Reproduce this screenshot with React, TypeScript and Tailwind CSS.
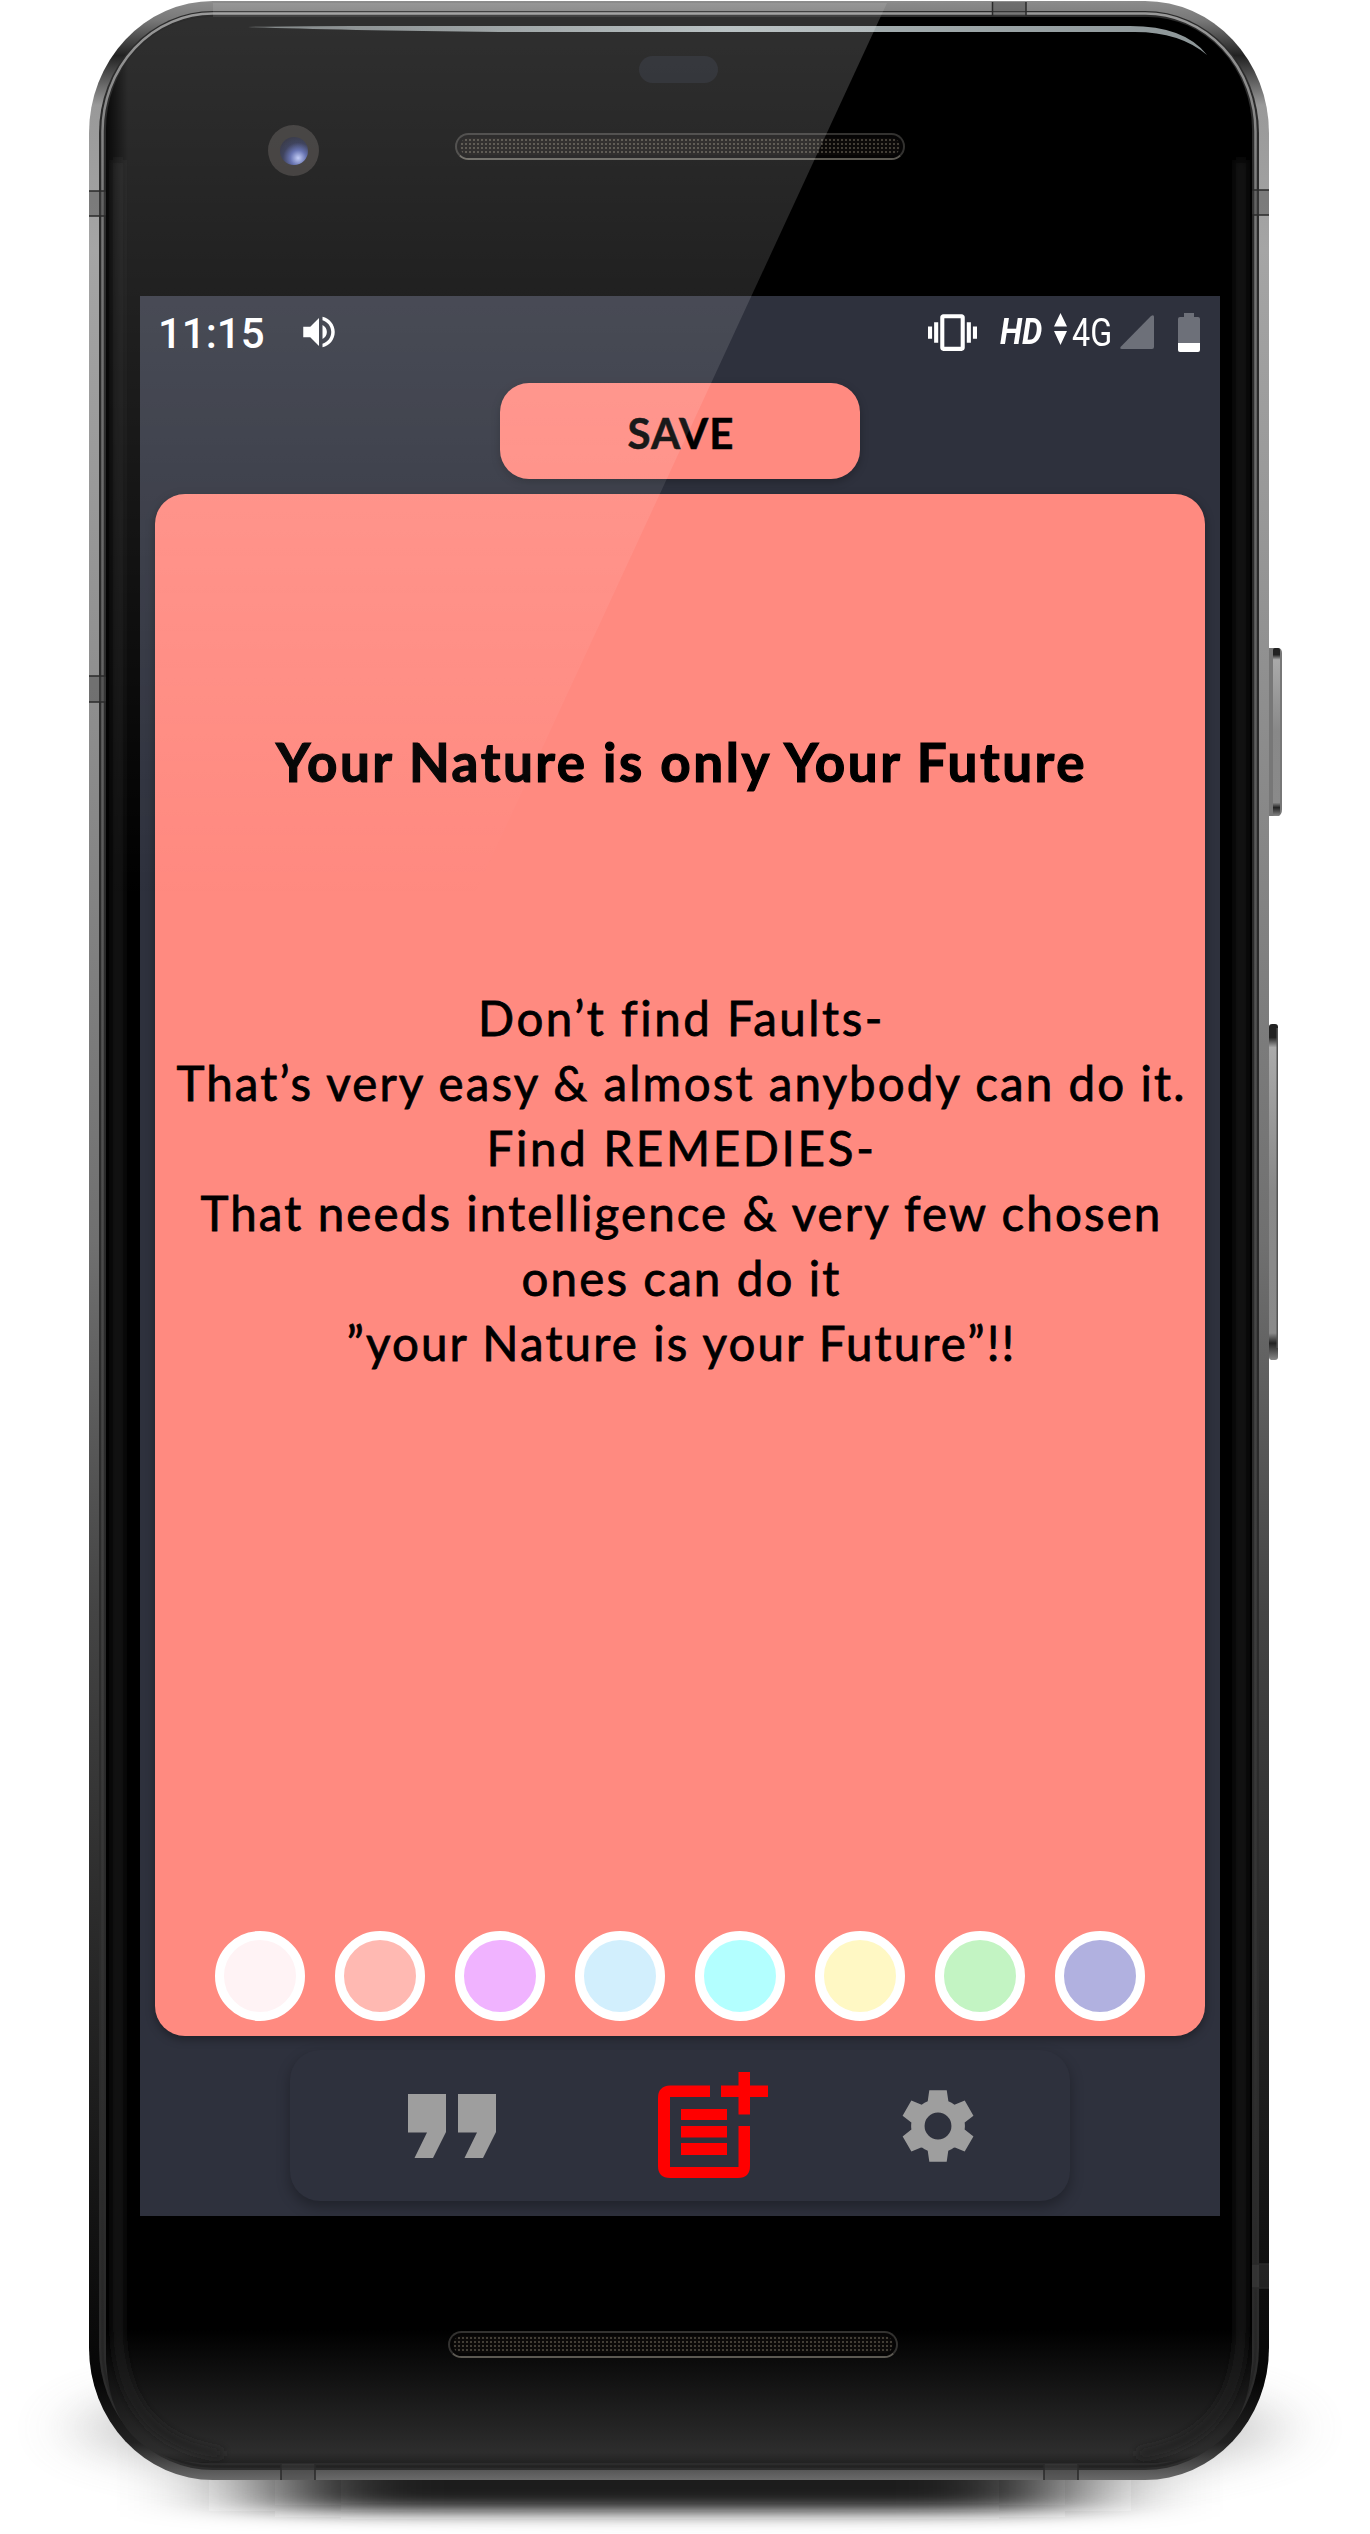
import { useLayoutEffect, useRef, useState } from "react";

/* One line of text, tracked so that it fills the given width. */
function FitLine({ text, className, width }: { text: string; className: string; width: number }) {
  const ref = useRef<HTMLSpanElement>(null);
  const [spacing, setSpacing] = useState(0);
  useLayoutEffect(() => {
    const natural = ref.current!.getBoundingClientRect().width;
    setSpacing((width - natural) / text.length);
  }, [text, width]);
  return (
    <div className={`whitespace-nowrap ${className}`}>
      <span ref={ref} style={{ letterSpacing: spacing }}>{text}</span>
    </div>
  );
}

const quote = [
  { text: "Don’t find Faults-", width: 406 },
  { text: "That’s very easy & almost anybody can do it.", width: 1010 },
  { text: "Find REMEDIES-", width: 390 },
  { text: "That needs intelligence & very few chosen", width: 962 },
  { text: "ones can do it", width: 320 },
  { text: "”your Nature is your Future”!!", width: 670 },
];

const swatches = ["bg-[#fff3f5]", "bg-[#ffb9b2]", "bg-[#f0b3ff]", "bg-[#d2effd]", "bg-[#b3ffff]", "bg-[#fff8c4]", "bg-[#c3f4c3]", "bg-[#b1b1e0]"];

function StatusBar() {
  return (
    <div className="flex h-[72px] items-center pl-[18px] pr-5 font-[Roboto] text-white">
      <span className="pt-[3px] text-[42px] font-medium leading-[72px]">11:15</span>
      <svg className="ml-[33px] size-[42px]" viewBox="0 0 24 24" fill="currentColor">
        <path d="M3 9v6h4l5 5V4L7 9H3zm13.500 3c0-1.770-1.020-3.290-2.500-4.030v8.050c1.480-.730 2.500-2.250 2.500-4.020zM14 3.230v2.060c2.890.860 5 3.540 5 6.710s-2.110 5.850-5 6.710v2.060c4.010-.910 7-4.490 7-8.770s-2.990-7.860-7-8.770z" />
      </svg>
      <div className="ml-auto flex items-center">
        <svg className="size-[49px]" viewBox="0 0 24 24" fill="currentColor">
          <path d="M0 15h2V9H0v6zm3 2h2V7H3v10zm19-8v6h2V9h-2zm-3 8h2V7h-2v10zM16.500 3h-9C6.670 3 6 3.670 6 4.500v15c0 .830.670 1.500 1.500 1.500h9c.830 0 1.500-.670 1.500-1.500v-15c0-.830-.670-1.500-1.500-1.500zM16 19H8V5h8v14z" />
        </svg>
        <span className="ml-[23px] inline-block w-[50px] origin-left scale-x-[0.87] text-[37px] font-bold italic leading-[70px]">HD</span>
        <svg className="ml-1 h-8 w-[13px] -translate-y-[3px]" viewBox="0 0 13 32" fill="currentColor">
          <path d="M6.500 0 13 13.500H0zM6.500 32 13 18H0z" />
        </svg>
        <span className="ml-[5px] inline-block w-12 origin-left scale-x-[0.85] pt-px text-[38px] leading-[70px]">4G</span>
        <svg className="h-[34px] w-[34px]" viewBox="0 0 34 34"><path d="M34 2v30q0 2-2 2H2q-3 0-1-2.500L31 1q3-2 3 1z" fill="#6d7079" /></svg>
        <svg className="ml-6 h-[39px] w-[22px]" viewBox="0 0 22 39">
          <path d="M6 0h10v4h4q2 0 2 2v25H0V6q0-2 2-2h4z" fill="#6d7079" />
          <path d="M0 30h22v7q0 2-2 2H2q-2 0-2-2z" fill="#fff" />
        </svg>
      </div>
    </div>
  );
}

function Screen() {
  return (
    <div className="flex h-[1920px] w-[1080px] flex-col overflow-hidden bg-[#2e313d] font-['Lato',sans-serif] text-black">
      <StatusBar />
      <button className="mx-auto mt-[15px] flex h-24 w-[360px] shrink-0 justify-center rounded-[29px] bg-[#ff8a80] pl-0.5 pt-1 shadow-[0_3px_9px_rgba(0,0,0,0.25)]">
        <FitLine text="SAVE" width={107} className="text-[42px] font-bold leading-[92px] [-webkit-text-stroke:0.5px_black]" />
      </button>
      <main className="mx-[15px] mt-[15px] flex h-[1542px] shrink-0 flex-col items-center rounded-[30px] bg-[#ff8a80] shadow-[0_3px_10px_rgba(0,0,0,0.35)]">
        <FitLine text="Your Nature is only Your Future" width={811} className="mt-[236px] pl-[3px] text-[53px] font-bold leading-[64px] [-webkit-text-stroke:1.2px_black]" />
        <div className="mt-[191px] flex flex-col items-center pl-[3px]">
          {quote.map((l) => (
            <FitLine key={l.text} text={l.text} width={l.width} className="text-[47.500px] font-normal leading-[65px] [-webkit-text-stroke:0.8px_black]" />
          ))}
        </div>
        <div className="mb-[15px] mt-auto flex gap-[30px]">
          {swatches.map((c) => (
            <button key={c} className={`size-[90px] rounded-full border-[9px] border-white ${c}`} />
          ))}
        </div>
      </main>
      <nav className="mx-auto mt-[14px] flex h-[151px] w-[780px] shrink-0 items-center rounded-[30px] bg-[#2e313d] shadow-[0_6px_14px_rgba(0,0,0,0.3)]">
        <svg className="ml-[118px] h-16 w-[88px]" viewBox="0 0 88 64" fill="#9e9e9e">
          <path d="M0 0h38v38L25 64H6.500l12.500-25.500H0zM50 0h38v38L75 64H56.500L69 38.500H50z" />
        </svg>
        <svg className="ml-[162px] h-[106px] w-[110px] -translate-y-px" viewBox="0 0 110 106" fill="#f00">
          <path d="M52 13.500H12Q0 14 0 26v68q0 12 12 12h68q12 0 12-12V54H80.500v41H12V25h40zM80.500 0H92v13.500h18V25H92v17.500H80.500V25H63V13.500h17.500zM23 37h46v11H23zM23 54h46v11.500H23zM23 71h46v12H23z" />
        </svg>
        <svg className="ml-[127px] size-[86px]" viewBox="0 0 24 24" fill="#9e9e9e" fillRule="evenodd">
          <path d="M19.440 12.990l-.010.020c.040-.330.080-.670.080-1.010 0-.340-.030-.660-.070-.990l.010.020 2.440-1.920-2.430-4.220-2.870 1.160.010.010c-.520-.400-1.090-.740-1.710-1h.010L14.440 2H9.570l-.440 3.070h.010c-.620.260-1.190.600-1.710 1l.010-.010-2.880-1.170-2.440 4.220 2.440 1.920.010-.020c-.040.330-.070.650-.070.990 0 .340.030.680.080 1.010l-.010-.020-2.100 1.650-.330.260 2.430 4.200 2.880-1.150-.020-.040c.530.410 1.100.750 1.730 1.010h-.030L9.580 22h4.850s.030-.180.060-.420l.380-2.650h-.010c.620-.260 1.200-.600 1.730-1.010l-.020.040 2.880 1.150 2.430-4.200s-.140-.120-.330-.260l-2.110-1.660zM12 15.750a3.750 3.750 0 1 1 0-7.500a3.750 3.750 0 0 1 0 7.500z" />
        </svg>
      </nav>
    </div>
  );
}

function Grille({ className }: { className: string }) {
  return (
    <div className={`h-[27px] w-[450px] rounded-full border-2 border-[#333230] border-b-[#5c5952] bg-[#060505] p-[3px] ${className}`}>
      <div className="h-full w-full rounded-full bg-[radial-gradient(circle_at_2px_2px,#4b463d_0.6px,#0c0a09_1.4px)] bg-[size:4px_4px]" />
    </div>
  );
}

/* Metal frame, glass bezel, antenna bands and side keys. */
function Frame() {
  return (
    <svg className="absolute left-0 top-0 h-[2534px] w-[1370px]" viewBox="0 0 1370 2534">
      <defs>
        <linearGradient id="metal" x1="0" y1="0" x2="0" y2="1">
          <stop offset="0" stopColor="#8c8c8c" />
          <stop offset=".008" stopColor="#777" />
          <stop offset=".022" stopColor="#222" />
          <stop offset=".042" stopColor="#999" />
          <stop offset=".1" stopColor="#a5a5a5" />
          <stop offset=".3" stopColor="#8c8c8c" />
          <stop offset=".5" stopColor="#707070" />
          <stop offset=".65" stopColor="#444" />
          <stop offset=".8" stopColor="#262626" />
          <stop offset=".96" stopColor="#060606" />
          <stop offset=".985" stopColor="#222" />
          <stop offset="1" stopColor="#6a6a6a" />
        </linearGradient>
        <linearGradient id="rim" x1="0" y1="0" x2="0" y2="1">
          <stop offset="0" stopColor="#999" />
          <stop offset=".08" stopColor="#777" />
          <stop offset=".5" stopColor="#4a4a4a" />
          <stop offset="1" stopColor="#222" />
        </linearGradient>
        <linearGradient id="chin" x1="0" y1="2330" x2="0" y2="2463" gradientUnits="userSpaceOnUse">
          <stop offset="0" stopColor="#000" />
          <stop offset=".92" stopColor="#2d2d2d" />
          <stop offset="1" stopColor="#222" />
        </linearGradient>
        <linearGradient id="shine" x1="0" y1="0" x2="1" y2="0">
          <stop offset="0" stopColor="#aab4b6" stopOpacity=".6" />
          <stop offset=".5" stopColor="#aab4b6" />
          <stop offset="1" stopColor="#8d9698" />
        </linearGradient>
        <linearGradient id="key" x1="0" y1="0" x2="0" y2="1">
          <stop offset="0" stopColor="#222" />
          <stop offset=".04" stopColor="#222" />
          <stop offset=".07" stopColor="#aaa" />
          <stop offset=".5" stopColor="#888" />
          <stop offset=".92" stopColor="#8a8a8a" />
          <stop offset=".95" stopColor="#222" />
          <stop offset="1" stopColor="#888" />
        </linearGradient>
        <filter id="soft"><feGaussianBlur stdDeviation="5" /></filter>
        <filter id="wide" x="-20%" y="-60%" width="140%" height="220%"><feGaussianBlur stdDeviation="34 20" /></filter>
        <filter id="floor" x="-20%" y="-60%" width="140%" height="220%"><feGaussianBlur stdDeviation="70 9" /></filter>
      </defs>
      <ellipse cx="680" cy="2428" rx="600" ry="66" fill="#888" opacity=".45" filter="url(#wide)" />
      <rect x="275" y="2440" width="790" height="71" fill="#1c1c1c" filter="url(#floor)" />
      <path d="M1269 648h10q3 1 3 5v156q0 6-4 7h-9z" fill="#777" />
      <rect x="1273" y="648" width="7" height="168" rx="2" fill="url(#key)" />
      <rect x="1269" y="1024" width="9" height="336" rx="3" fill="url(#key)" />
      <rect x="1276.500" y="1028" width="1.500" height="320" fill="#555" />
      <rect x="89" y="1" width="1180" height="2479" rx="124" ry="132" fill="url(#metal)" />
      <rect x="99" y="11" width="1160" height="2459" rx="114" ry="122" fill="#2c2c2c" />
      <rect x="102.500" y="13.500" width="1153" height="2453" rx="110" ry="118" fill="none" stroke="url(#rim)" strokeWidth="2.500" />
      <g fill="#444" fillOpacity=".4">
        <path d="M89 191h17v25H89zM1252 190h17v25h-17zM992 2h34v14h-34zM89 676h17v26H89zM1252 2264h17v24h-17zM281 2464h34v16h-34zM1044 2464h34v16h-34z" />
      </g>
      <path
        d="M89 191h17M89 216h17M1252 190h17M1252 215h17M992.500 2v14M1026 2v14M89 676h17M89 702h17M1252 2264h17M1252 2288h17M281 2464v16M315 2464v16M1044 2464v16M1078 2464v16"
        stroke="#2a2a2a"
        strokeWidth="1.500"
      />
      <rect x="106" y="17" width="1146" height="2446" rx="104" ry="112" fill="#000" />
      <path d="M106 2200V2351Q106 2463 210 2463H1148Q1252 2463 1252 2351V2200z" fill="url(#chin)" />
      <path d="M118 160V2330Q121 2440 222 2454M1241 160V2330Q1239 2440 1138 2454" stroke="#222" strokeWidth="7" fill="none" filter="url(#soft)" />
      <path d="M248 27Q300 25.500 400 26H1130Q1185 26 1207 55Q1180 32 1135 32H500Q330 30 248 27z" fill="url(#shine)" />
    </svg>
  );
}

/* Diagonal reflection that lies over glass and screen. */
function Glare() {
  return (
    <svg className="pointer-events-none absolute left-0 top-0 h-[1000px] w-[1000px]" viewBox="0 0 1000 1000">
      <defs>
        <linearGradient id="glare" x1="0" y1="0" x2="0" y2="900" gradientUnits="userSpaceOnUse">
          <stop offset="0" stopColor="#fff" stopOpacity=".19" />
          <stop offset="1" stopColor="#fff" stopOpacity="0" />
        </linearGradient>
        <linearGradient id="fade" x1="106" y1="0" x2="128" y2="0" gradientUnits="userSpaceOnUse">
          <stop offset="0" stopColor="#fff" stopOpacity=".2" />
          <stop offset="1" stopColor="#fff" />
        </linearGradient>
        <mask id="inset"><rect width="1000" height="1000" fill="url(#fade)" /></mask>
      </defs>
      <path d="M106 129A104 112 0 0 1 210 17H880.500L472 900H106z" fill="url(#glare)" mask="url(#inset)" />
      <path d="M213 3H887L880.500 17H213z" fill="#fff" fillOpacity=".1" />
    </svg>
  );
}

export default function App() {
  return (
    <div className="relative h-[2534px] w-[1370px] overflow-hidden bg-white">
      <Frame />
      <div className="relative flex h-[2480px] flex-col pl-[140px]">
        <div className="h-[296px]">
          <div className="ml-[499px] mt-[56px] h-[27px] w-[79px] rounded-[14px] bg-[#0c0e14]" />
          <div className="mt-[42px] flex items-start">
            <div className="ml-[128px] flex size-[51px] items-center justify-center rounded-full bg-[#262322]">
              <div className="size-7 rounded-full bg-[radial-gradient(circle_at_65%_75%,#b8c4f5_0,#4c5aa3_28%,#1c2140_55%,#101014_100%)]" />
            </div>
            <Grille className="ml-[136px] mt-[8px]" />
          </div>
        </div>
        <Screen />
        <Grille className="ml-[308px] mt-[115px]" />
      </div>
      <Glare />
    </div>
  );
}
